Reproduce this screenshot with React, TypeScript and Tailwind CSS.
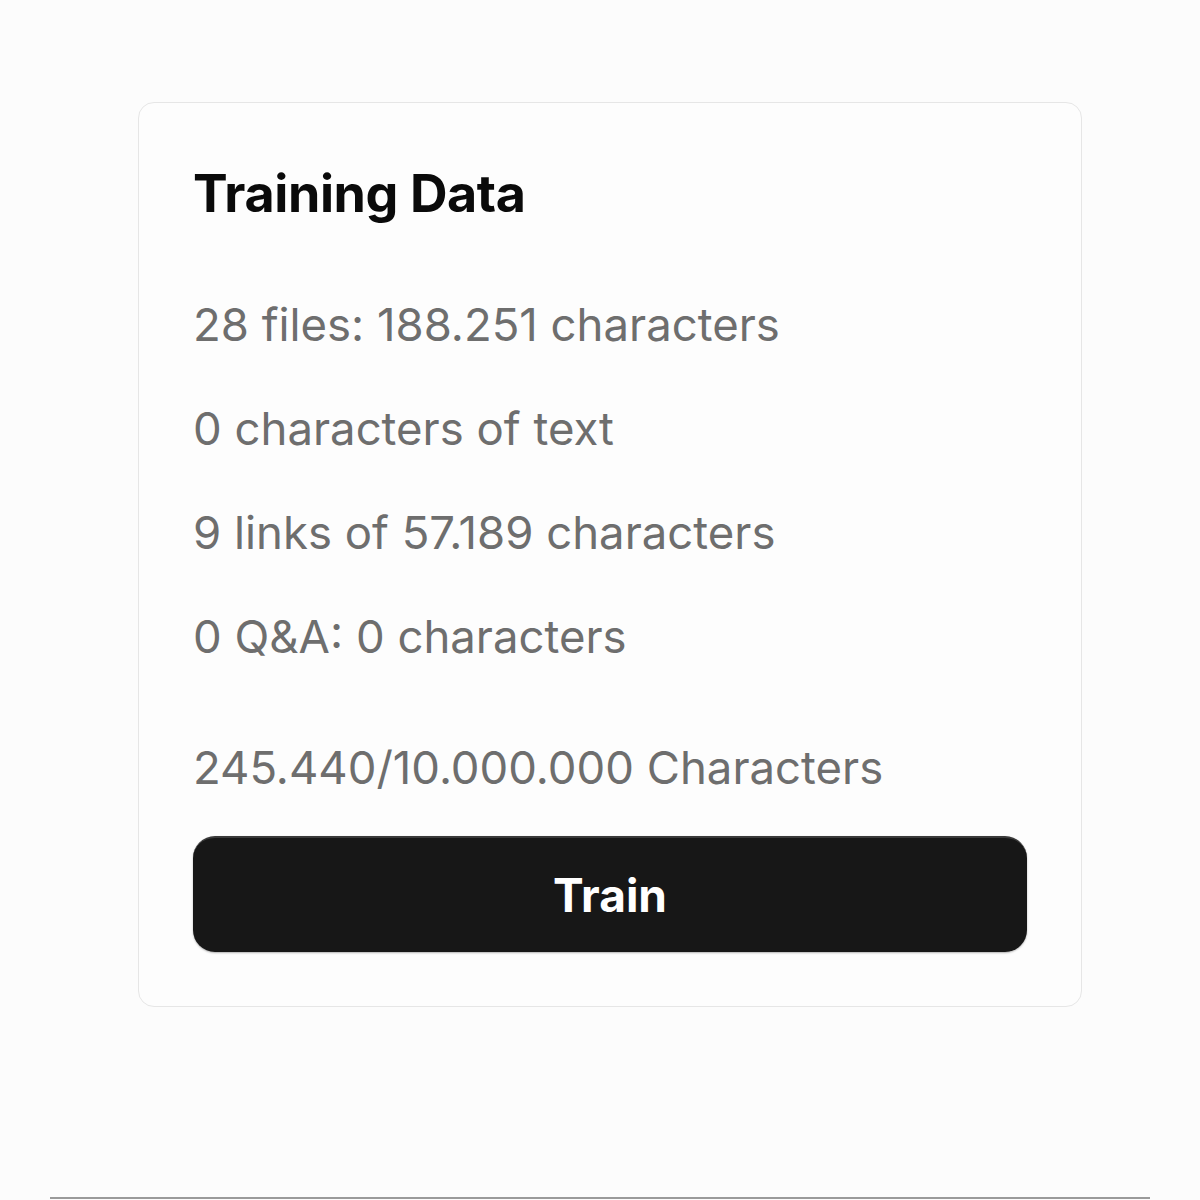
import React from "react";

export default function App() {
  const lines = [
    "28 files: 188.251 characters",
    "0 characters of text",
    "9 links of 57.189 characters",
    "0 Q&A: 0 characters",
  ];
  return (
    <div
      className="w-[1200px] h-[1200px] bg-[#fcfcfc] flex flex-col"
      style={{ fontFamily: "Inter, 'Noto Sans', sans-serif" }}
    >
      <div className="ml-[138px] mt-[102px] w-[944px] rounded-[16px] border border-[#e6e6e6] bg-[#fdfdfd] pl-[54px] pr-[54px] pt-[60px] pb-[54px] flex flex-col">
        <h2 className="text-[52px] leading-[62px] font-bold text-[#0a0a0a] tracking-[-0.4px]">
          Training Data
        </h2>
        <div className="mt-[48px] flex flex-col">
          {lines.map((l) => (
            <div key={l} className="text-[45.5px] leading-[104px] text-[#6e6e6e]">
              {l}
            </div>
          ))}
          <div className="mt-[27px] text-[45.5px] leading-[104px] text-[#6e6e6e]">
            245.440/10.000.000 Characters
          </div>
        </div>
        <button className="mt-[16px] h-[116px] w-full rounded-[22px] bg-[#171717] border-t-2 border-t-[#3a3a3a] shadow-[0_1px_2px_rgba(0,0,0,0.3)] text-white text-[46px] font-bold">
          Train
        </button>
      </div>
      <div className="mt-auto mb-[1px] mx-[50px] h-[2px] bg-[#9a9a9a]" />
    </div>
  );
}
